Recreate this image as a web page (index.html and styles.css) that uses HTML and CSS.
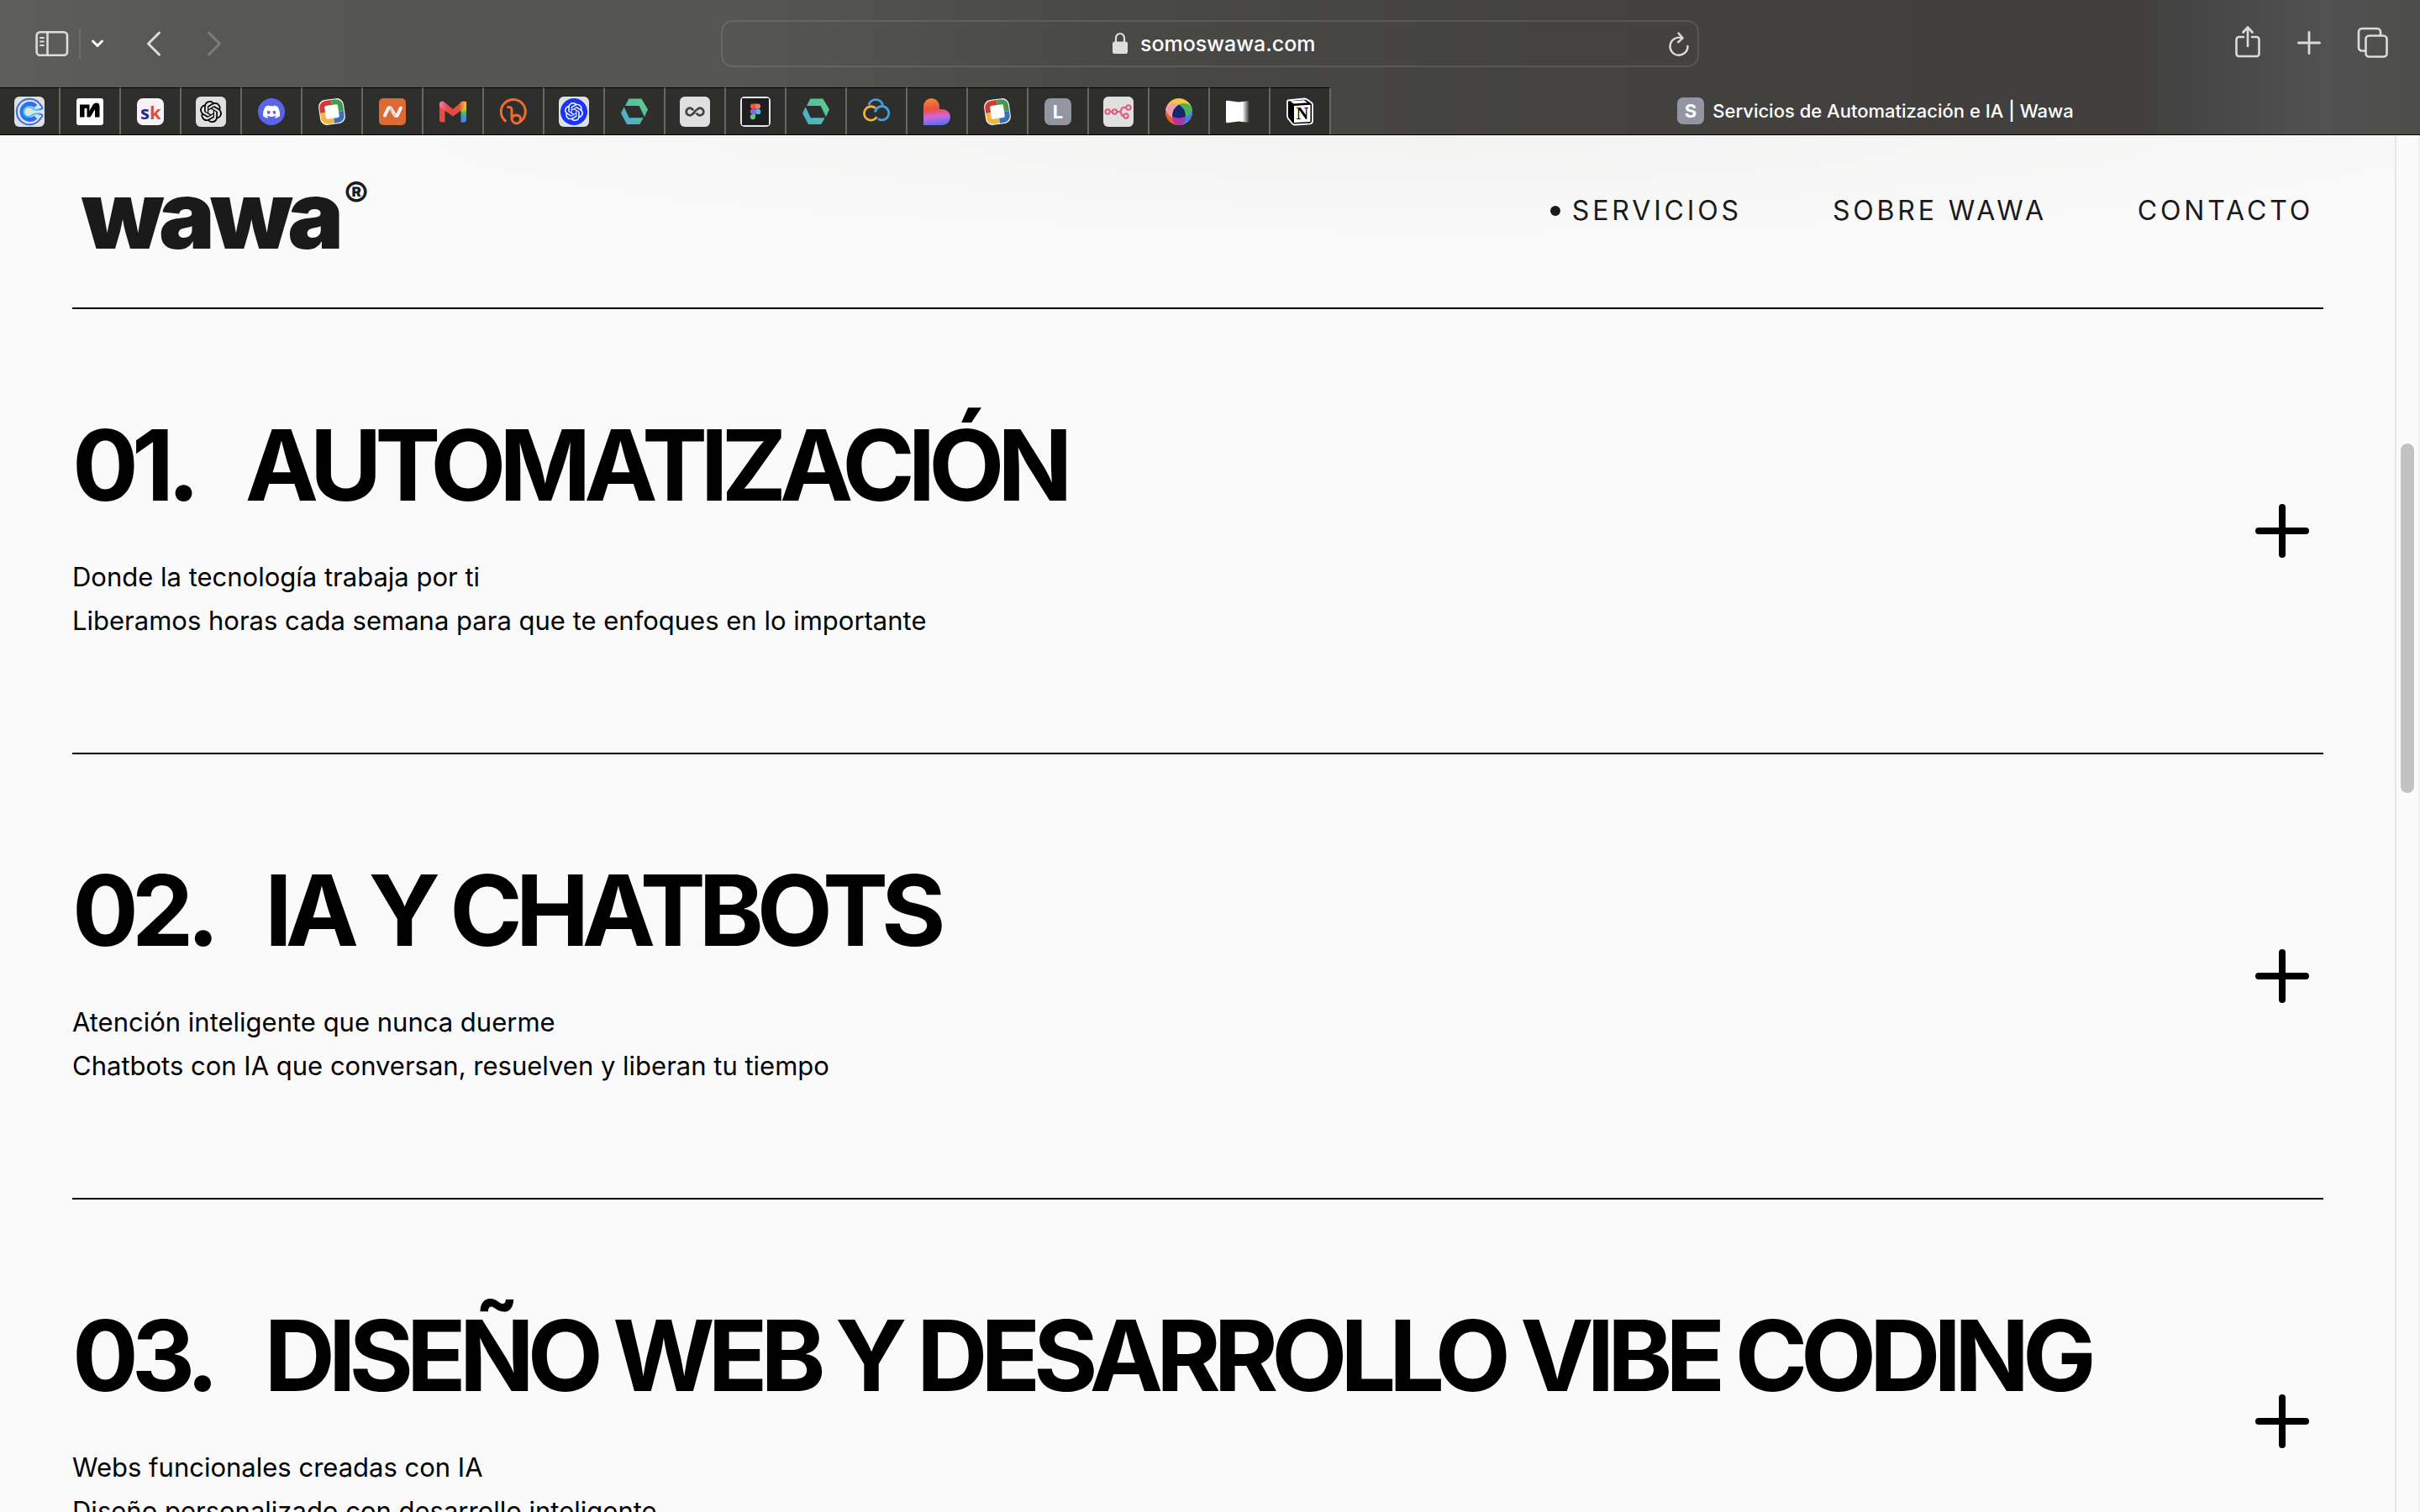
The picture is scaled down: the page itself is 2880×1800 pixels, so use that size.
FILE: index.html
```html
<!DOCTYPE html>
<html lang="es">
<head>
  <meta charset="UTF-8" />
  <meta name="viewport" content="width=device-width, initial-scale=1.0" />
  <title>Servicios de Automatización e IA | Wawa</title>
  <link rel="stylesheet" href="styles.css">
</head>

<body>
  <!-- Shared icons -->
  <svg class="sprite" aria-hidden="true">
    <defs>
      <linearGradient id="mint" x1="0" y1="1" x2="1" y2="0">
        <stop offset="0" stop-color="#4aa8d8" /><stop offset="1" stop-color="#5fcf80" />
      </linearGradient>
      <linearGradient id="heart" x1="0.3" y1="0" x2="0.4" y2="1">
        <stop offset="0" stop-color="#f08a32" /><stop offset="0.4" stop-color="#ee4e3c" /><stop offset="0.68" stop-color="#d267d8" /><stop offset="1" stop-color="#5a6cf5" />
      </linearGradient>
      <linearGradient id="mail" x1="0" y1="0" x2="0" y2="1">
        <stop offset="0" stop-color="#fbc934" /><stop offset="0.3" stop-color="#f6c63a" /><stop offset="0.55" stop-color="#4fb55c" /><stop offset="0.85" stop-color="#4a86f2" />
      </linearGradient>
      <linearGradient id="mailTop" x1="0" y1="0" x2="1" y2="0">
        <stop offset="0" stop-color="#ee7fa8" /><stop offset="0.3" stop-color="#e84a43" /><stop offset="0.72" stop-color="#ea4c3c" /><stop offset="1" stop-color="#fbc934" />
      </linearGradient>
      <linearGradient id="fade" x1="0" y1="0" x2="1" y2="0">
        <stop offset="0.7" stop-color="#fff" /><stop offset="1" stop-color="#fff" stop-opacity="0" />
      </linearGradient>
      <clipPath id="disc"><circle cx="18" cy="18" r="16" /></clipPath>
    </defs>
    <symbol id="knot" viewBox="0 0 24 24">
      <path d="M22.2819 9.8211a5.9847 5.9847 0 0 0-.5157-4.9108 6.0462 6.0462 0 0 0-6.5098-2.9A6.0651 6.0651 0 0 0 4.9807 4.1818a5.9847 5.9847 0 0 0-3.9977 2.9 6.0462 6.0462 0 0 0 .7427 7.0966 5.98 5.98 0 0 0 .511 4.9107 6.051 6.051 0 0 0 6.5146 2.9001A5.9847 5.9847 0 0 0 13.2599 24a6.0557 6.0557 0 0 0 5.7718-4.2058 5.9894 5.9894 0 0 0 3.9977-2.9001 6.0557 6.0557 0 0 0-.7475-7.0729zm-9.022 12.6081a4.4755 4.4755 0 0 1-2.8764-1.0408l.1419-.0804 4.7783-2.7582a.7948.7948 0 0 0 .3927-.6813v-6.7369l2.02 1.1686a.071.071 0 0 1 .038.052v5.5826a4.504 4.504 0 0 1-4.4945 4.4944zm-9.6607-4.1254a4.4708 4.4708 0 0 1-.5346-3.0137l.142.0852 4.783 2.7582a.7712.7712 0 0 0 .7806 0l5.8428-3.3685v2.3324a.0804.0804 0 0 1-.0332.0615L9.74 19.9502a4.4992 4.4992 0 0 1-6.1408-1.6464zM2.3408 7.8956a4.485 4.485 0 0 1 2.3655-1.9728V11.6a.7664.7664 0 0 0 .3879.6765l5.8144 3.3543-2.0201 1.1685a.0757.0757 0 0 1-.071 0l-4.8303-2.7865A4.504 4.504 0 0 1 2.3408 7.872zm16.5963 3.8558L13.1038 8.364 15.1192 7.2a.0757.0757 0 0 1 .071 0l4.8303 2.7913a4.4944 4.4944 0 0 1-.6765 8.1042v-5.6772a.79.79 0 0 0-.407-.667zm2.0107-3.0231l-.142-.0852-4.7735-2.7818a.7759.7759 0 0 0-.7854 0L9.409 9.2297V6.8974a.0662.0662 0 0 1 .0284-.0615l4.8303-2.7866a4.4992 4.4992 0 0 1 6.6802 4.66zM8.3065 12.863l-2.02-1.1638a.0804.0804 0 0 1-.038-.0567V6.0742a4.4992 4.4992 0 0 1 7.3757-3.4537l-.142.0805L8.704 5.459a.7948.7948 0 0 0-.3927.6813zm1.0976-2.3654l2.602-1.4998 2.6069 1.4998v2.9994l-2.5974 1.4997-2.6067-1.4997Z" />
    </symbol>
    <symbol id="hex" viewBox="0 0 36 36">
      <path fill="url(#mint)" d="M11.3 2.5h15L34 15.3l-4 9L23.7 11H7zM2 19.7l3.7-7.4 6 13h17L24.3 33H9z" />
    </symbol>
    <symbol id="frame" viewBox="0 0 36 36">
      <g transform="rotate(-8 18 18)">
        <rect x="3" y="3" width="30" height="30" rx="8" fill="#fff" />
        <path fill="#d23b34" d="M4 18v-6a8 8 0 0 1 8-8h7v8h-7v6z" />
        <path fill="#46984f" d="M19 4h5a8 8 0 0 1 8 8v7h-7v-7h-6z" />
        <path fill="#3b6fb6" d="M32 19v5a8 8 0 0 1-8 8h-5v-7h6v-6z" />
        <path fill="#efb643" d="M19 32h-7a8 8 0 0 1-8-8v-6h8v7h7z" />
        <rect x="10" y="10" width="16" height="16" rx="2" fill="#fff" />
      </g>
    </symbol>
    <symbol id="plus" viewBox="0 0 64 64">
      <path d="M32 4v56M4 32h56" fill="none" stroke="currentColor" stroke-width="8" stroke-linecap="round" />
    </symbol>
  </svg>

  <div class="browser">
    <div class="toolbar">
      <div class="tools">
        <button class="tool" aria-label="Barra lateral">
          <svg width="40" height="32" viewBox="0 0 40 32" fill="none" stroke="currentColor" stroke-width="2.6" stroke-linecap="round"><rect x="1.6" y="2.3" width="36.4" height="27.4" rx="4" /><path d="M14.5 2.5v27" /><path stroke-width="1.8" d="M6 9h4M6 13.5h4M6 18h4" /></svg>
        </button>
        <span class="split"></span>
        <button class="tool" aria-label="Grupos de pestañas">
          <svg width="16" height="12" viewBox="0 0 16 12" fill="none" stroke="#fff" stroke-width="3" stroke-linecap="round" stroke-linejoin="round"><path d="M2.5 3 8 8.5 13.5 3" /></svg>
        </button>
        <button class="tool back-btn" aria-label="Atrás">
          <svg width="18" height="30" viewBox="0 0 18 30" fill="none" stroke="currentColor" stroke-width="3" stroke-linecap="round" stroke-linejoin="round"><path d="M15.5 2 2.5 15l13 13" /></svg>
        </button>
        <button class="tool forward-btn" aria-label="Adelante" disabled>
          <svg width="18" height="30" viewBox="0 0 18 30" fill="none" stroke="currentColor" stroke-width="3" stroke-linecap="round" stroke-linejoin="round"><path d="m2.5 2 13 13-13 13" /></svg>
        </button>
      </div>

      <form class="address">
        <svg width="20" height="28" viewBox="0 0 20 28"><rect x="1" y="11.5" width="18" height="14.5" rx="2.5" fill="#dededd" /><path d="M5 12V7.5a5 5.5 0 0 1 10 0V12" fill="none" stroke="#dededd" stroke-width="2.2" /></svg>
        <input class="url" type="text" aria-label="Dirección" value="somoswawa.com" />
        <button class="tool reload" type="button" aria-label="Recargar">
          <svg width="26" height="32" viewBox="0 0 26 32" fill="none" stroke="currentColor" stroke-width="2.4" stroke-linecap="round" stroke-linejoin="round"><path d="M16.5 9.3A10.5 10.5 0 1 0 23.5 19" /><path d="m12.5 3.5 5 5.8-5.5 5" /></svg>
        </button>
      </form>

      <div class="tools tools-right">
        <button class="tool" aria-label="Compartir">
          <svg width="32" height="44" viewBox="0 0 32 44" fill="none" stroke="currentColor" stroke-width="2.6" stroke-linecap="round" stroke-linejoin="round"><path d="M11 14H5.5a3 3 0 0 0-3 3v17a3 3 0 0 0 3 3h21a3 3 0 0 0 3-3V17a3 3 0 0 0-3-3H21" /><path d="M16 25V3M10.5 8.5l5.500-6 5.500 6" /></svg>
        </button>
        <button class="tool" aria-label="Nueva pestaña">
          <svg width="28" height="30" viewBox="0 0 28 30" fill="none" stroke="currentColor" stroke-width="2.8" stroke-linecap="round"><path d="M14 1.5v25M1.5 14h25" /></svg>
        </button>
        <button class="tool" aria-label="Vista de pestañas">
          <svg width="38" height="40" viewBox="0 0 38 40" fill="none" stroke="currentColor" stroke-width="2.6" stroke-linejoin="round"><rect x="10.5" y="10.5" width="25" height="25" rx="4" /><path d="M10.5 28.5H6a4 4 0 0 1-4-4V6a4 4 0 0 1 4-4h18a4 4 0 0 1 4 4v4.5" /></svg>
        </button>
      </div>
    </div>

    <nav class="tabs" aria-label="Pestañas">
      <button class="tab" aria-label="Calendario">
        <svg viewBox="0 0 36 36"><rect width="36" height="36" rx="6" fill="#e0e0e0" /><path d="M30.5 9A15.3 15.3 0 1 0 30.5 27q3.5-4 3-5-2-1.5-5-1.5M30.5 9q3.5 4 3 5-2 1.5-5 1.5" fill="none" stroke="#2f6df6" stroke-width="2" /><path d="M25.5 11.5a9.5 9.5 0 1 0 0 13" fill="none" stroke="#2f6df6" stroke-width="5" /><path d="M30 15.5q-5 1-8-1a6 6 0 1 0 0 7q3-2 8-1" fill="none" stroke="#35c8f5" stroke-width="2" /></svg>
      </button>
      <button class="tab" aria-label="Métricas">
        <svg viewBox="0 0 36 36"><rect x="2" y="2" width="32" height="32" rx="3" fill="#fff" /><path fill="#000" d="M6 9.5h11.5V17l3-5.5Q22.5 7.5 26 7.5t3.5 4.5v12.5H24V15l-4.5 8q-1 1.5-3 1.5h-2V14h-3v10.5H6z" /></svg>
      </button>
      <button class="tab" aria-label="SK">
        <svg viewBox="0 0 36 36"><rect x="2" y="2" width="32" height="32" rx="7" fill="#f7f2f7" /><text x="6" y="27" class="glyph glyph-sk" fill="#23278f">s<tspan fill="#d9513c">k</tspan></text></svg>
      </button>
      <button class="tab" aria-label="Asistente">
        <svg viewBox="0 0 36 36"><rect width="36" height="36" rx="6" fill="#e0e0e0" /><use href="#knot" x="5" y="5" width="26" height="26" /></svg>
      </button>
      <button class="tab" aria-label="Chat">
        <svg viewBox="0 0 36 36"><circle cx="18" cy="18" r="16" fill="#5865ea" /><g transform="translate(8 8) scale(.84)"><path fill="#fff" d="M20.317 4.3698a19.7913 19.7913 0 00-4.8851-1.5152.0741.0741 0 00-.0785.0371c-.211.3753-.4447.8648-.6083 1.2495-1.8447-.2762-3.68-.2762-5.4868 0-.1636-.3933-.4058-.8742-.6177-1.2495a.077.077 0 00-.0785-.037 19.7363 19.7363 0 00-4.8852 1.515.0699.0699 0 00-.0321.0277C.5334 9.0458-.319 13.5799.0992 18.0578a.0824.0824 0 00.0312.0561c2.0528 1.5076 4.0413 2.4228 5.9929 3.0294a.0777.0777 0 00.0842-.0276c.4616-.6304.8731-1.2952 1.226-1.9942a.076.076 0 00-.0416-.1057c-.6528-.2476-1.2743-.5495-1.8722-.8923a.077.077 0 01-.0076-.1277c.1258-.0943.2517-.1923.3718-.2914a.0743.0743 0 01.0776-.0105c3.9278 1.7933 8.18 1.7933 12.0614 0a.0739.0739 0 01.0785.0095c.1202.099.246.1981.3728.2924a.077.077 0 01-.0066.1276 12.2986 12.2986 0 01-1.873.8914.0766.0766 0 00-.0407.1067c.3604.698.7719 1.3628 1.225 1.9932a.076.076 0 00.0842.0286c1.961-.6067 3.9495-1.5219 6.0023-3.0294a.077.077 0 00.0313-.0552c.5004-5.177-.8382-9.6739-3.5485-13.6604a.061.061 0 00-.0312-.0286zM8.02 15.3312c-1.1825 0-2.1569-1.0857-2.1569-2.419 0-1.3332.9555-2.4189 2.157-2.4189 1.2108 0 2.1757 1.0952 2.1568 2.419 0 1.3332-.9555 2.4189-2.1569 2.4189zm7.9748 0c-1.1825 0-2.1569-1.0857-2.1569-2.419 0-1.3332.9554-2.4189 2.1569-2.4189 1.2108 0 2.1757 1.0952 2.1568 2.419 0 1.3332-.946 2.4189-2.1568 2.4189Z" /></g></svg>
      </button>
      <button class="tab" aria-label="Marco"><svg viewBox="0 0 36 36"><use href="#frame" /></svg></button>
      <button class="tab" aria-label="Dominios">
        <svg viewBox="0 0 36 36"><rect x="2" y="2" width="32" height="32" rx="5" fill="#dc6a35" /><path d="M9 22.5 13 14q1.5-2 3 0l5 8q1.5 2 3 0l4-8.5" fill="none" stroke="#f4f2f0" stroke-width="4" stroke-linecap="round" stroke-linejoin="round" /><path d="m15.5 14 2.5 4.5M19.5 20l2 3" stroke="#c9c5c2" stroke-width="2" /></svg>
      </button>
      <button class="tab" aria-label="Correo">
        <svg viewBox="0 0 36 36"><path fill="#e84a43" d="M2 11h6.5v19.5H5a3 3 0 0 1-3-3z" /><path fill="url(#mail)" d="M27.5 6H34v21.5a3 3 0 0 1-3 3h-3.5z" /><path fill="url(#mailTop)" d="M2 9q0-4 4-3.5 1 0 2.5 1.5l9.5 8 9.5-8q1.5-1.5 2.5-1.5Q34 5 34 9v3l-16 11.5L2 12z" /></svg>
      </button>
      <button class="tab" aria-label="Enlaces">
        <svg viewBox="0 0 36 36" fill="none" stroke="#ee6c30" stroke-width="3" stroke-linecap="round"><path d="M8.5 29A14.5 14.5 0 1 1 25 30.5" /><path d="M11.5 12.5q4.5-.5 4.5 3v10a6 6 0 0 0 6 6.5q4.5-.5 4.5-5t-4.5-5q-4 0-5.5 3" /></svg>
      </button>
      <button class="tab" aria-label="Asistente IA">
        <svg viewBox="0 0 36 36"><rect width="36" height="36" rx="6" fill="#e0e0e0" /><circle cx="18" cy="18" r="16" fill="#1733ff" /><use href="#knot" x="7" y="7" width="22" height="22" fill="#fff" /></svg>
      </button>
      <button class="tab" aria-label="Panel"><svg viewBox="0 0 36 36"><use href="#hex" /></svg></button>
      <button class="tab" aria-label="Infinito">
        <svg viewBox="0 0 36 36"><rect width="36" height="36" rx="6" fill="#e0e0e0" /><path d="M16 19.5a4.3 4.3 0 1 1 0-3M20 19.5a4.3 4.3 0 1 0 0-3M15.5 19.5h1.5q1.5-3 3-3" fill="none" stroke="#454545" stroke-width="2.8" /></svg>
      </button>
      <button class="tab" aria-label="Diseño">
        <svg viewBox="0 0 36 36"><rect width="36" height="36" rx="5" fill="#e6e6e6" /><rect x="2" y="2" width="32" height="32" rx="1" fill="#1e1e1e" /><path fill="#ed5a2c" d="M18 8.5v6.2h-3a3.1 3.1 0 0 1 0-6.2z" /><path fill="#f0796a" d="M18 8.5h3a3.1 3.1 0 0 1 0 6.2h-3z" /><path fill="#9a57f5" d="M18 14.7V21h-3a3.1 3.1 0 0 1 0-6.3z" /><circle cx="21.1" cy="17.9" r="3.2" fill="#4ab6f7" /><path fill="#55cc83" d="M18 21v3.2a3.1 3.1 0 1 1-3-3.2z" /></svg>
      </button>
      <button class="tab" aria-label="Panel 2"><svg viewBox="0 0 36 36"><use href="#hex" /></svg></button>
      <button class="tab" aria-label="Nube">
        <svg viewBox="0 0 36 36" fill="none" stroke-width="2.8"><path stroke="#459fe0" d="M9 10a8.5 8.5 0 0 1 16.5 0" /><path stroke="#efb23c" d="M17 13.8a8.2 8.2 0 1 0 1.5 10.5" /><path stroke="#459fe0" d="M16.5 18.5a8.2 8.2 0 1 1 3.5 8" /></svg>
      </button>
      <button class="tab" aria-label="Favoritos">
        <svg viewBox="0 0 36 36"><path fill="url(#heart)" d="M2 34V11.5a9.5 9.5 0 0 1 19 0V15h3.5a9.5 9.5 0 0 1 0 19z" /></svg>
      </button>
      <button class="tab" aria-label="Marco 2"><svg viewBox="0 0 36 36"><use href="#frame" /></svg></button>
      <button class="tab" aria-label="L">
        <svg viewBox="0 0 36 36"><rect x="2" y="2" width="32" height="32" rx="7" fill="#9495a3" /><text x="18" y="26" text-anchor="middle" class="glyph" fill="#fff">L</text></svg>
      </button>
      <button class="tab" aria-label="Flujos">
        <svg viewBox="0 0 36 36"><rect width="36" height="36" rx="6" fill="#e0e0e0" /><g fill="none" stroke="#e2587a" stroke-width="2"><circle cx="5.2" cy="18" r="2.7" /><circle cx="13.5" cy="18" r="2.7" /><circle cx="30" cy="13" r="2.7" /><circle cx="27" cy="23" r="2.7" /><path d="M8 18h2.5M16.5 18H19q2 0 2.5-2.5T24.5 13H27M19 18q2 0 2.5 2.5T24 23" /></g></svg>
      </button>
      <button class="tab" aria-label="Color">
        <svg viewBox="0 0 36 36"><g clip-path="url(#disc)"><rect width="36" height="36" fill="#f5c642" /><path fill="#ec5a2d" d="M0 12h18v24H0z" /><path fill="#3b7bf5" d="M18 12h18v24H18z" /><path fill="#f29bb2" d="M2 15Q6 5 18 9.5q-7.5 5-8 15.500Q4 22 2 15" /><path fill="#4bb25a" d="M34 15Q30 5 18 9.500q7.500 5 8 15.500Q32 22 34 15" /><path fill="#b135a5" d="M10 23q8 4 16 0 0 6-4 11h-8q-4-5-4-11" /><path fill="#10296e" d="M18 9.500q8 5 8 14-8 4-16 0 0-9 8-14" /></g></svg>
      </button>
      <button class="tab" aria-label="Vídeo">
        <svg viewBox="0 0 36 36"><path fill="url(#fade)" d="M2 6q0-1.5 2-1.3l13 1.8L30 5v26l-13-1.5L4 31.3Q2 31.5 2 30z" /></svg>
      </button>
      <button class="tab" aria-label="Notas">
        <svg viewBox="0 0 36 36"><path d="M4 4.5 23 2.5q2 0 3.5 1l5.5 4q1 1 1 2.5v19q0 3-3 3.3L12 33.5q-2 0-3.2-1.5L4 26q-1-1.5-1-3V6q0-1.3 1-1.5" fill="#000" stroke="#fff" stroke-width="1.8" /><path fill="#fff" d="m6 5.500 17-1.200 4 3-16 1.200zM11 11l19.500-1.200V30L11 31z" /><text x="21" y="27" text-anchor="middle" class="glyph glyph-serif" fill="#000">N</text></svg>
      </button>
      <button class="tab tab-active" aria-current="page">
        <svg viewBox="0 0 32 32"><rect width="32" height="32" rx="7" fill="#9495a3" /><text x="16" y="24" text-anchor="middle" class="glyph" fill="#fff">S</text></svg>
        Servicios de Automatización e IA | Wawa
      </button>
    </nav>
  </div>

  <div class="viewport">
    <div class="page">
      <header class="site-header">
        <a class="logo" href="#">wawa<span class="mark">®</span></a>
        <nav class="menu">
          <a class="current" href="#servicios">SERVICIOS</a>
          <a href="#sobre">SOBRE WAWA</a>
          <a href="#contacto">CONTACTO</a>
        </nav>
      </header>

      <main class="services" id="servicios">
        <section class="service">
          <div>
            <h2><span>01.</span><span>AUTOMATIZACIÓN</span></h2>
            <p>Donde la tecnología trabaja por ti<br>Liberamos horas cada semana para que te enfoques en lo importante</p>
          </div>
          <button aria-label="Abrir Automatización"><svg class="plus"><use href="#plus" /></svg></button>
        </section>
        <section class="service">
          <div>
            <h2><span>02.</span><span>IA Y CHATBOTS</span></h2>
            <p>Atención inteligente que nunca duerme<br>Chatbots con IA que conversan, resuelven y liberan tu tiempo</p>
          </div>
          <button aria-label="Abrir IA y Chatbots"><svg class="plus"><use href="#plus" /></svg></button>
        </section>
        <section class="service">
          <div>
            <h2><span>03.</span><span>DISEÑO WEB Y DESARROLLO VIBE CODING</span></h2>
            <p>Webs funcionales creadas con IA<br>Diseño personalizado con desarrollo inteligente</p>
          </div>
          <button aria-label="Abrir Diseño web"><svg class="plus"><use href="#plus" /></svg></button>
        </section>
      </main>
    </div>
    <div class="scrollbar"><span class="thumb"></span></div>
  </div>
</body>
</html>
```
FILE: styles.css
```css
:root {
  --page-bg: #fafafa;
  --ink: #1a1a1a;
  --tab-bg: #2e2e2d;
  --tab-line: #666664;
  --tool: #dcdcdb;
}

* {
  box-sizing: border-box;
}

body {
  margin: 0;
  height: 100vh;
  display: flex;
  flex-direction: column;
  overflow: hidden;
  background: var(--page-bg);
  color: #000;
  font-family: "Inter", "Liberation Sans", sans-serif;
}

button {
  padding: 0;
  border: none;
  background: none;
  color: inherit;
  font: inherit;
}

svg {
  display: block;
}

.sprite {
  position: absolute;
  width: 0;
  height: 0;
}

/* Browser bar */
.browser {
  flex: none;
  background: linear-gradient(90deg, #5e5e5c 0%, #575755 8%, #565654 30%, #494947 45%, #43423f 65%, #403f3e 88%, #515151 96%, #4d4d4b 100%);
  border-bottom: 1px solid #000;
}

.toolbar {
  height: 104px;
  display: grid;
  grid-template-columns: 1fr 1164px 1fr;
  align-items: center;
  color: var(--tool);
}

.tools {
  display: flex;
  align-items: center;
  padding-left: 42px;
}

.tools-right {
  justify-content: flex-end;
  gap: 43px;
  padding: 0 37px 0 0;
}

.split {
  width: 2px;
  height: 36px;
  margin: 0 12px;
  background: #6d6d6b;
}

.back-btn {
  margin-left: 50px;
}

.forward-btn {
  margin-left: 54px;
  color: #7c7c7a;
}

.address {
  height: 56px;
  display: flex;
  align-items: center;
  gap: 14px;
  padding: 0 9px 0 463px;
  border: 2px solid rgba(255, 255, 255, 0.11);
  border-radius: 14px;
}

.url {
  width: 240px;
  padding: 0;
  border: none;
  background: none;
  color: #fff;
  font: 500 25px/32px "Inter", sans-serif;
}

.reload {
  margin-left: auto;
}

/* Tabs */
.tabs {
  display: flex;
  height: 56px;
}

.tab {
  flex: none;
  width: 72px;
  display: flex;
  align-items: center;
  justify-content: center;
  border-top: 1px solid #000;
  border-right: 2px solid var(--tab-line);
  background: var(--tab-bg);
}

.tab svg {
  width: 36px;
  height: 36px;
}

.tab-active {
  flex: 1;
  gap: 10px;
  border: none;
  background: none;
  color: #fff;
  font-size: 22px;
  font-weight: 500;
}

.tab-active svg {
  width: 32px;
  height: 32px;
}

.glyph {
  font-family: "Inter", sans-serif;
  font-size: 22px;
  font-weight: 700;
}

.glyph-sk {
  font-family: "Open Sans", sans-serif;
}

.glyph-serif {
  font-family: "Liberation Serif", serif;
  font-size: 20px;
}

/* Site */
.viewport {
  flex: 1;
  min-height: 0;
  display: flex;
}

.page {
  flex: 1;
  overflow: hidden;
}

.site-header {
  height: 185px;
  display: flex;
  align-items: flex-start;
  justify-content: space-between;
  padding: 0 97px;
  border-bottom: 1px solid #f7f7f7;
  background: radial-gradient(ellipse 50% 75% at 60% 0, #f3f3f2, #fafafa);
  color: var(--ink);
}

.logo {
  display: flex;
  padding-top: 38px;
  color: inherit;
  font-size: 112px;
  font-weight: 900;
  line-height: 112px;
  letter-spacing: -0.05em;
  text-decoration: none;
}

.mark {
  margin-left: 6px;
  font-size: 44px;
  line-height: 66px;
}

.menu {
  display: flex;
  gap: 108px;
  padding-top: 70px;
}

.menu a {
  color: inherit;
  font-size: 32px;
  line-height: 40px;
  letter-spacing: 0.12em;
  text-decoration: none;
}

.menu .current {
  display: flex;
  align-items: center;
  gap: 14px;
}

.menu .current::before {
  content: "";
  width: 12px;
  height: 12px;
  border-radius: 50%;
  background: var(--ink);
}

.services {
  padding: 20px 85px 0 86px;
}

.service {
  display: flex;
  align-items: center;
  justify-content: space-between;
  padding: 129px 17px 129px 0;
  border-top: 2px solid #000;
}

.service h2 {
  display: flex;
  gap: 62px;
  margin: 0 0 50px;
  font-size: 117px;
  font-weight: 700;
  line-height: 114px;
  letter-spacing: -0.07em;
  white-space: nowrap;
}

.service p {
  margin: 0 0 2px;
  font-size: 31px;
  line-height: 52px;
}

.plus {
  width: 64px;
  height: 64px;
}

/* Scrollbar */
.scrollbar {
  width: 30px;
  display: grid;
  grid-template-rows: 367fr 416fr 856fr;
  justify-content: center;
  border-left: 2px solid #e7e7e7;
  border-right: 2px solid #f1f1f1;
  background: #fbfbfb;
}

.thumb {
  grid-row: 2;
  width: 16px;
  border-radius: 8px;
  background: #c2c2c2;
}
```
